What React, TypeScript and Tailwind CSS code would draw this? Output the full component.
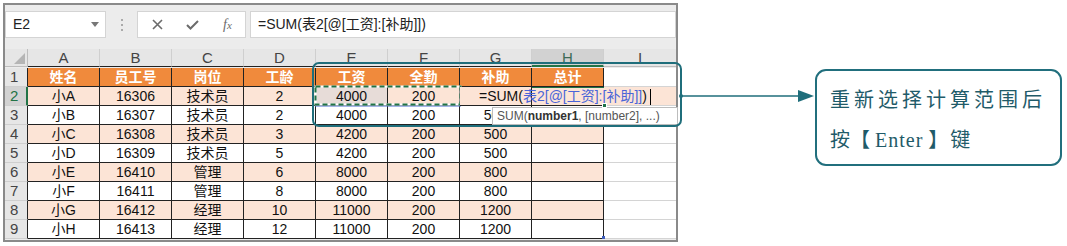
const FONT = '"Liberation Sans", "Noto Sans CJK SC", sans-serif';

const cols = ['A', 'B', 'C', 'D', 'E', 'F', 'G', 'H'];
const head = ['姓名', '员工号', '岗位', '工龄', '工资', '全勤', '补助', '总计'];

// rows 2..9, G2/H2 are drawn separately (cell in edit mode)
const rows: string[][] = [
  ['小A', '16306', '技术员', '2', '4000', '200', '', ''],
  ['小B', '16307', '技术员', '2', '4000', '200', '500', ''],
  ['小C', '16308', '技术员', '3', '4200', '200', '500', ''],
  ['小D', '16309', '技术员', '5', '4200', '200', '500', ''],
  ['小E', '16410', '管理', '6', '8000', '200', '800', ''],
  ['小F', '16411', '管理', '8', '8000', '200', '800', ''],
  ['小G', '16412', '经理', '10', '11000', '200', '1200', ''],
  ['小H', '16413', '经理', '12', '11000', '200', '1200', ''],
];

function FormulaBar() {
  return (
    <div className="flex items-stretch h-[27px] mt-[6px]">
      {/* Name box */}
      <div className="w-[101px] bg-white border border-[#d4d4d4] flex items-center justify-between pl-[7px] pr-[6px]">
        <span className="text-[14px] text-[#222]">E2</span>
        <svg width="8" height="5" viewBox="0 0 8 5">
          <path d="M0 0 L8 0 L4 5 Z" fill="#777" />
        </svg>
      </div>
      <div className="w-[31px] flex flex-col items-center justify-center gap-[3px]">
        <div className="w-[2px] h-[2px] bg-[#aaa]" />
        <div className="w-[2px] h-[2px] bg-[#aaa]" />
        <div className="w-[2px] h-[2px] bg-[#aaa]" />
      </div>
      {/* Cancel / enter / fx */}
      <div className="w-[109px] bg-white border border-[#d4d4d4] flex items-center pl-[2px]">
        <div className="w-[35px] flex justify-center">
          <svg width="11" height="11" viewBox="0 0 11 11">
            <path d="M1 1 L10 10 M10 1 L1 10" stroke="#6b6b6b" strokeWidth="1.6" />
          </svg>
        </div>
        <div className="w-[35px] flex justify-center">
          <svg width="13" height="10" viewBox="0 0 13 10">
            <path d="M1 5 L4.5 8.5 L12 1" stroke="#6b6b6b" strokeWidth="2" fill="none" />
          </svg>
        </div>
        <div className="w-[35px] flex justify-center">
          <span className="italic text-[14px] text-[#6b6b6b]" style={{ fontFamily: '"Liberation Serif", serif' }}>
            f<span className="text-[11px]">x</span>
          </span>
        </div>
      </div>
      <div className="flex-1 ml-[4px] bg-white border border-[#d4d4d4] flex items-center pl-[7px]">
        <span className="text-[14px] text-[#222] whitespace-nowrap">=SUM(表2[@[工资]:[补助]])</span>
      </div>
    </div>
  );
}

function Grid() {
  return (
    <div className="mt-[11px] grid grid-cols-[23px_repeat(8,72px)_72px] auto-rows-[19px] text-[14px] leading-[18px] text-[#111]">
      {/* column letters */}
      <div className="h-[18px] bg-[#e6e6e6] border-r border-b border-[#bdbdbd] flex items-end justify-end p-[2px]">
        <svg width="11" height="11" viewBox="0 0 11 11">
          <path d="M11 0 L11 11 L0 11 Z" fill="#b5b5b5" />
        </svg>
      </div>
      {cols.map((c) => (
        <div
          key={c}
          className={`h-[18px] border-r border-[#cfcfcf] text-center text-[15px] leading-[17px] ${
            c === 'H' ? 'bg-[#d2d2d2] border-b-2 border-b-[#217346] text-[#3d6b57]' : 'bg-[#e6e6e6] border-b border-b-[#222] text-[#444]'
          }`}
        >
          {c}
        </div>
      ))}
      <div className="h-[18px] bg-[#e6e6e6] border-b border-[#bdbdbd] text-center text-[15px] leading-[17px] text-[#444]">I</div>

      {/* row 1 */}
      <div className="bg-[#e6e6e6] border-r border-r-[#222] border-b border-b-[#cfcfcf] pl-[5px] text-[15px] text-[#444]">1</div>
      {head.map((h) => (
        <div key={h} className="bg-[#f08a3c] border-r border-b border-[#222] text-center text-white font-bold">
          {h}
        </div>
      ))}
      <div className="bg-white border-b border-[#d4d4d4]" />

      {rows.map((r, i) => {
        const n = i + 2;
        const peach = n % 2 === 0;
        return [
          <div
            key={`n${n}`}
            className={`border-b border-b-[#cfcfcf] pl-[5px] text-[15px] ${
              n === 2 ? 'bg-[#d2d2d2] border-r-2 border-r-[#217346] text-[#217346]' : 'bg-[#e6e6e6] border-r border-r-[#222] text-[#444]'
            }`}
          >
            {n}
          </div>,
          ...r.map((v, j) => {
            if (n === 2 && j === 6) {
              // cell being edited: text runs on over H2 and I2
              return (
                <div key={`${n}-${j}`} className="relative z-10 bg-[#fce4d6] border-r border-b border-[#222] pl-[19px] whitespace-nowrap overflow-visible">
                  <span className="text-[#111]">=SUM(</span>
                  <span className="text-[#4a64d8]">表2[@[工资]:[补助]]</span>
                  <span className="text-[#111]">)</span>
                  <span className="inline-block align-middle w-px h-[16px] bg-black ml-[3px]" />
                </div>
              );
            }
            if (n === 2 && j === 7) {
              return <div key={`${n}-${j}`} className="bg-[#fce4d6] border-t border-t-[#217346] border-b border-b-[#222]" />;
            }
            const bg = n === 2 && j === 4 ? 'bg-[#e7dcd8]' : peach ? 'bg-[#fce4d6]' : 'bg-white';
            return (
              <div key={`${n}-${j}`} className={`${bg} border-r border-b border-[#222] text-center`}>
                {v}
              </div>
            );
          }),
          <div key={`i${n}`} className={`${n === 2 ? 'bg-[#fce4d6]' : 'bg-white'} border-b border-[#d4d4d4]`} />,
        ];
      })}
    </div>
  );
}

function ExcelWindow() {
  return (
    <div className="relative ml-[3px] mt-[3px] w-[675px] h-[239px] border-2 border-[#8a8a8a] bg-[#ececec] overflow-hidden">
      <FormulaBar />
      <Grid />
      {/* table resize handle */}
      <div className="absolute left-[597px] top-[231px] w-[3px] h-[3px] bg-[#3f5fbf]" />
      {/* fill handle of the active cell */}
      <div className="absolute z-20 left-[597px] top-[98px] w-[5px] h-[5px] bg-[#217346] border border-white" />
    </div>
  );
}

function Callout() {
  return (
    <div className="flex items-start mt-[69px]">
      <svg width="137" height="14" viewBox="0 0 137 14" className="mt-[20px]">
        <circle cx="3" cy="7" r="2" fill="#1f6e7b" />
        <line x1="3" y1="7" x2="122" y2="7" stroke="#1f6e7b" strokeWidth="1.5" />
        <path d="M120 1 L136 7 L120 13 Z" fill="#1f6e7b" />
      </svg>
      <div
        className="w-[247px] h-[97px] border-2 border-[#216f7d] rounded-[11px] bg-white pl-[13px] pt-[9px] text-[20px] leading-[40px] tracking-[4px] text-[#1f5b69]"
        style={{ fontFamily: '"Liberation Serif", "Noto Sans CJK SC", serif' }}
      >
        <div>重新选择计算范围后</div>
        <div className="flex items-baseline whitespace-nowrap">
          <span className="tracking-normal">按</span>
          <span className="tracking-normal">【</span>
          <span className="ml-[5px] tracking-[1px]">Enter</span>
          <span className="ml-[5px] tracking-normal">】</span>
          <span className="ml-[2px]">键</span>
        </div>
      </div>
    </div>
  );
}

export default function App() {
  return (
    <div className="relative flex items-start w-[1067px] h-[246px] bg-white overflow-hidden" style={{ fontFamily: FONT }}>
      <ExcelWindow />
      <Callout />

      {/* marching ants around E2:F2 */}
      <svg className="absolute left-[314px] top-[85px]" width="149" height="23" viewBox="0 0 149 23">
        <line x1="1" y1="21" x2="147" y2="21" stroke="#4a6fd6" strokeWidth="1" />
        <rect x="1.5" y="1.5" width="145" height="18" fill="none" stroke="#ffffff" strokeWidth="2" />
        <rect x="1.5" y="1.5" width="145" height="18" fill="none" stroke="#217346" strokeWidth="2" strokeDasharray="5 3" />
      </svg>

      {/* function tooltip */}
      <div className="absolute left-[492px] top-[107px] w-[186px] h-[18px] bg-white border border-[#bdbdbd] pl-[4px] text-[12px] leading-[16px] text-[#555] whitespace-nowrap">
        SUM(<span className="font-bold text-[#333]">number1</span>, [number2], ...)
      </div>

      {/* teal highlight frame */}
      <div className="absolute left-[312px] top-[62px] w-[370px] h-[65px] border-2 border-[#1f6e7b] rounded-[7px]" />
    </div>
  );
}
